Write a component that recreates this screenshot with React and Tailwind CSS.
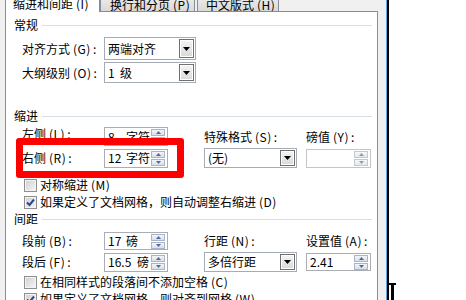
import React from "react";

const FONT = "font-['Noto_Sans_CJK_SC','Noto_Sans_CJK_JP',sans-serif]";

function L({ t, k, colon }) {
  return (
    <span className="whitespace-nowrap">
      {t}
      <span className="ml-[3px] tracking-[0.5px]">({k})</span>
      {colon ? <span className="ml-[2px]">:</span> : null}
    </span>
  );
}

function DownArrow() {
  return (
    <svg width="7" height="4" viewBox="0 0 7 4">
      <path d="M0 0h7L3.5 4z" fill="#000" />
    </svg>
  );
}

function DropBtn() {
  return (
    <div className="w-[15px] self-stretch border border-[#707070] bg-gradient-to-b from-[#f4f4f4] to-[#d9d9d9] shadow-[inset_0_0_0_1px_#ffffff] flex items-center justify-center">
      <DownArrow />
    </div>
  );
}

function Select({ text, className }) {
  return (
    <div className={`flex items-stretch border border-[#a5acb5] bg-white py-[1px] pr-[1px] ${className}`}>
      <span className="flex-1 flex items-center pl-[3px] whitespace-nowrap">{text}</span>
      <DropBtn />
    </div>
  );
}

function SpinHalf({ up, disabled }) {
  return (
    <div
      className={`w-[14px] h-[7px] border flex items-center justify-center ${
        disabled
          ? "border-[#c3cad6] bg-gradient-to-b from-[#f6f7f9] to-[#e4e8ee]"
          : "border-[#a9b4c6] bg-gradient-to-b from-[#f3f5f9] to-[#d9dfe9]"
      }`}
    >
      <svg width="5" height="3" viewBox="0 0 5 3">
        <path d={up ? "M0 3h5L2.5 0z" : "M0 0h5L2.5 3z"} fill={disabled ? "#8a9ab8" : "#4f6a9a"} />
      </svg>
    </div>
  );
}

function Spin({ num, unit, numW, className, disabled }) {
  return (
    <div
      className={`flex items-center border bg-white pl-[3px] pr-[2px] ${
        disabled ? "border-[#c2c6cc]" : "border-[#abadb3]"
      } ${className}`}
    >
      <span className="flex-1 flex whitespace-nowrap">
        <span className={numW}>{num}</span>
        {unit ? <span>{unit}</span> : null}
      </span>
      <div className="flex flex-col gap-[1px]">
        <SpinHalf up disabled={disabled} />
        <SpinHalf disabled={disabled} />
      </div>
    </div>
  );
}

function Check({ checked }) {
  return (
    <div className="w-[13px] h-[13px] border border-[#8e8f8f] bg-gradient-to-br from-[#cfcfcf] to-[#f7f7f7] shadow-[inset_0_0_0_1px_#f4f4f4] flex items-center justify-center shrink-0">
      {checked && (
        <svg width="9" height="9" viewBox="0 0 9 9">
          <path d="M1 4.5L3.5 7L8 1.5" stroke="#29488c" strokeWidth="2" fill="none" />
        </svg>
      )}
    </div>
  );
}

function Header({ text, className }) {
  return (
    <div className={`flex items-center h-[16px] ${className}`}>
      <span>{text}</span>
      <div className="flex-1 h-px bg-[#d5dfe5] ml-[4px] mr-[5px]" />
    </div>
  );
}

function CheckRow({ checked, children, className }) {
  return (
    <div className={`flex items-center h-[16px] pl-[10px] gap-[3px] whitespace-nowrap ${className}`}>
      <Check checked={checked} />
      {children}
    </div>
  );
}

export default function App() {
  return (
    <div
      className={`relative w-[466px] h-[300px] overflow-hidden bg-white flex text-[12px] leading-none text-black ${FONT}`}
    >
      <div className="w-[5px] shrink-0 bg-[#f0f0f0]" />
      <div className="w-[373px] shrink-0 flex flex-col bg-[#f0f0f0]">
        {/* tabs */}
        <div className="h-[12px] flex items-end shrink-0">
          <div className="w-[95px] h-[22px] shrink-0 bg-white border-l border-r border-[#898c95] pl-[7px] pb-[2px] flex items-end">
            <L t="缩进和间距" k="I" />
          </div>
          <div className="w-[95px] h-[20px] shrink-0 bg-gradient-to-b from-[#f2f2f2] to-[#d9d9d9] border border-[#898c95] pl-[9px] flex items-end">
            <L t="换行和分页" k="P" />
          </div>
          <div className="w-[2px] h-[12px] shrink-0 border-b border-[#898c95]" />
          <div className="w-[82px] h-[20px] shrink-0 bg-gradient-to-b from-[#f2f2f2] to-[#d9d9d9] border border-[#898c95] pl-[8px] flex items-end overflow-hidden">
            <L t="中文版式" k="H" />
          </div>
          <div className="flex-1 h-[12px] border-b border-[#898c95]" />
        </div>

        {/* panel */}
        <div className="flex-1 bg-white border-l border-r border-[#898c95] pl-[8px] pt-[5px] flex flex-col">
          <Header text="常规" />
          <div className="flex items-center h-[23px] mt-[4px] pl-[8px]">
            <span className="w-[82px]"><L t="对齐方式" k="G" colon /></span>
            <Select text="两端对齐" className="w-[92px] h-[23px]" />
          </div>
          <div className="flex items-center h-[21px] mt-[2px] pl-[8px]">
            <span className="w-[82px]"><L t="大纲级别" k="O" colon /></span>
            <Select text={"1\u00a0\u00a0级"} className="w-[92px] h-[21px]" />
          </div>

          <Header text="缩进" className="mt-[25px]" />
          <div className="flex items-center h-[20px] mt-[3px] pl-[8px]">
            <span className="w-[82px] self-start pt-[1px]"><L t="左侧" k="L" colon /></span>
            <Spin num="8" unit="字符" numW="w-[18px]" className="w-[64px] h-[19px] self-start" />
            <span className="w-[36px]" />
            <span className="w-[102px]"><L t="特殊格式" k="S" colon /></span>
            <span className="w-[65px]"><L t="磅值" k="Y" colon /></span>
          </div>
          <div className="flex items-center h-[20px] mt-[1px] pl-[8px]">
            <span className="w-[82px]"><L t="右侧" k="R" colon /></span>
            <Spin num="12" unit="字符" numW="w-[18px]" className="w-[64px] h-[19px]" />
            <span className="w-[36px]" />
            <Select text="(无)" className="w-[93px] h-[20px]" />
            <span className="w-[9px]" />
            <Spin num="" disabled className="w-[65px] h-[19px]" />
          </div>
          <CheckRow className="mt-[9px]">
            <L t="对称缩进" k="M" />
          </CheckRow>
          <CheckRow checked className="mt-[1px]">
            <L t="如果定义了文档网格，则自动调整右缩进" k="D" />
          </CheckRow>

          <Header text="间距" className="mt-[1px]" />
          <div className="flex items-center h-[20px] mt-[4px] pl-[8px]">
            <span className="w-[82px]"><L t="段前" k="B" colon /></span>
            <Spin num="17" unit="磅" numW="w-[18px]" className="w-[64px] h-[18px]" />
            <span className="w-[36px]" />
            <span className="w-[102px]"><L t="行距" k="N" colon /></span>
            <span className="w-[65px]"><L t="设置值" k="A" colon /></span>
          </div>
          <div className="flex items-center h-[20px] mt-[1px] pl-[8px]">
            <span className="w-[82px]"><L t="段后" k="F" colon /></span>
            <Spin num="16.5" unit="磅" numW="w-[29px]" className="w-[64px] h-[19px]" />
            <span className="w-[36px]" />
            <Select text="多倍行距" className="w-[93px] h-[20px]" />
            <span className="w-[9px]" />
            <Spin num="2.41" className="w-[65px] h-[18px]" />
          </div>
          <CheckRow className="mt-[2px]">
            <L t="在相同样式的段落间不添加空格" k="C" />
          </CheckRow>
          <CheckRow checked className="mt-[1px]">
            <L t="如果定义了文档网格，则对齐到网格" k="W" />
          </CheckRow>
        </div>
      </div>
      <div className="w-[8px] shrink-0 bg-[#f0f0f0]" />
      <div className="w-px shrink-0 bg-[#62a6dc]" />
      <div className="w-[2px] shrink-0 bg-black" />
      <div className="flex-1 bg-white" />

      {/* red annotation box */}
      <div className="absolute left-[16px] top-[138px] w-[168px] h-[40px] border-[7px] border-[#ff0000] rounded-[3px]" />

      {/* mouse I-beam cursor */}
      <svg className="absolute left-[387px] top-[282px]" width="12" height="18" viewBox="0 0 12 18">
        <rect x="2" y="1" width="7" height="2" fill="#000" />
        <rect x="4" y="3" width="3" height="15" fill="#000" />
      </svg>
    </div>
  );
}
